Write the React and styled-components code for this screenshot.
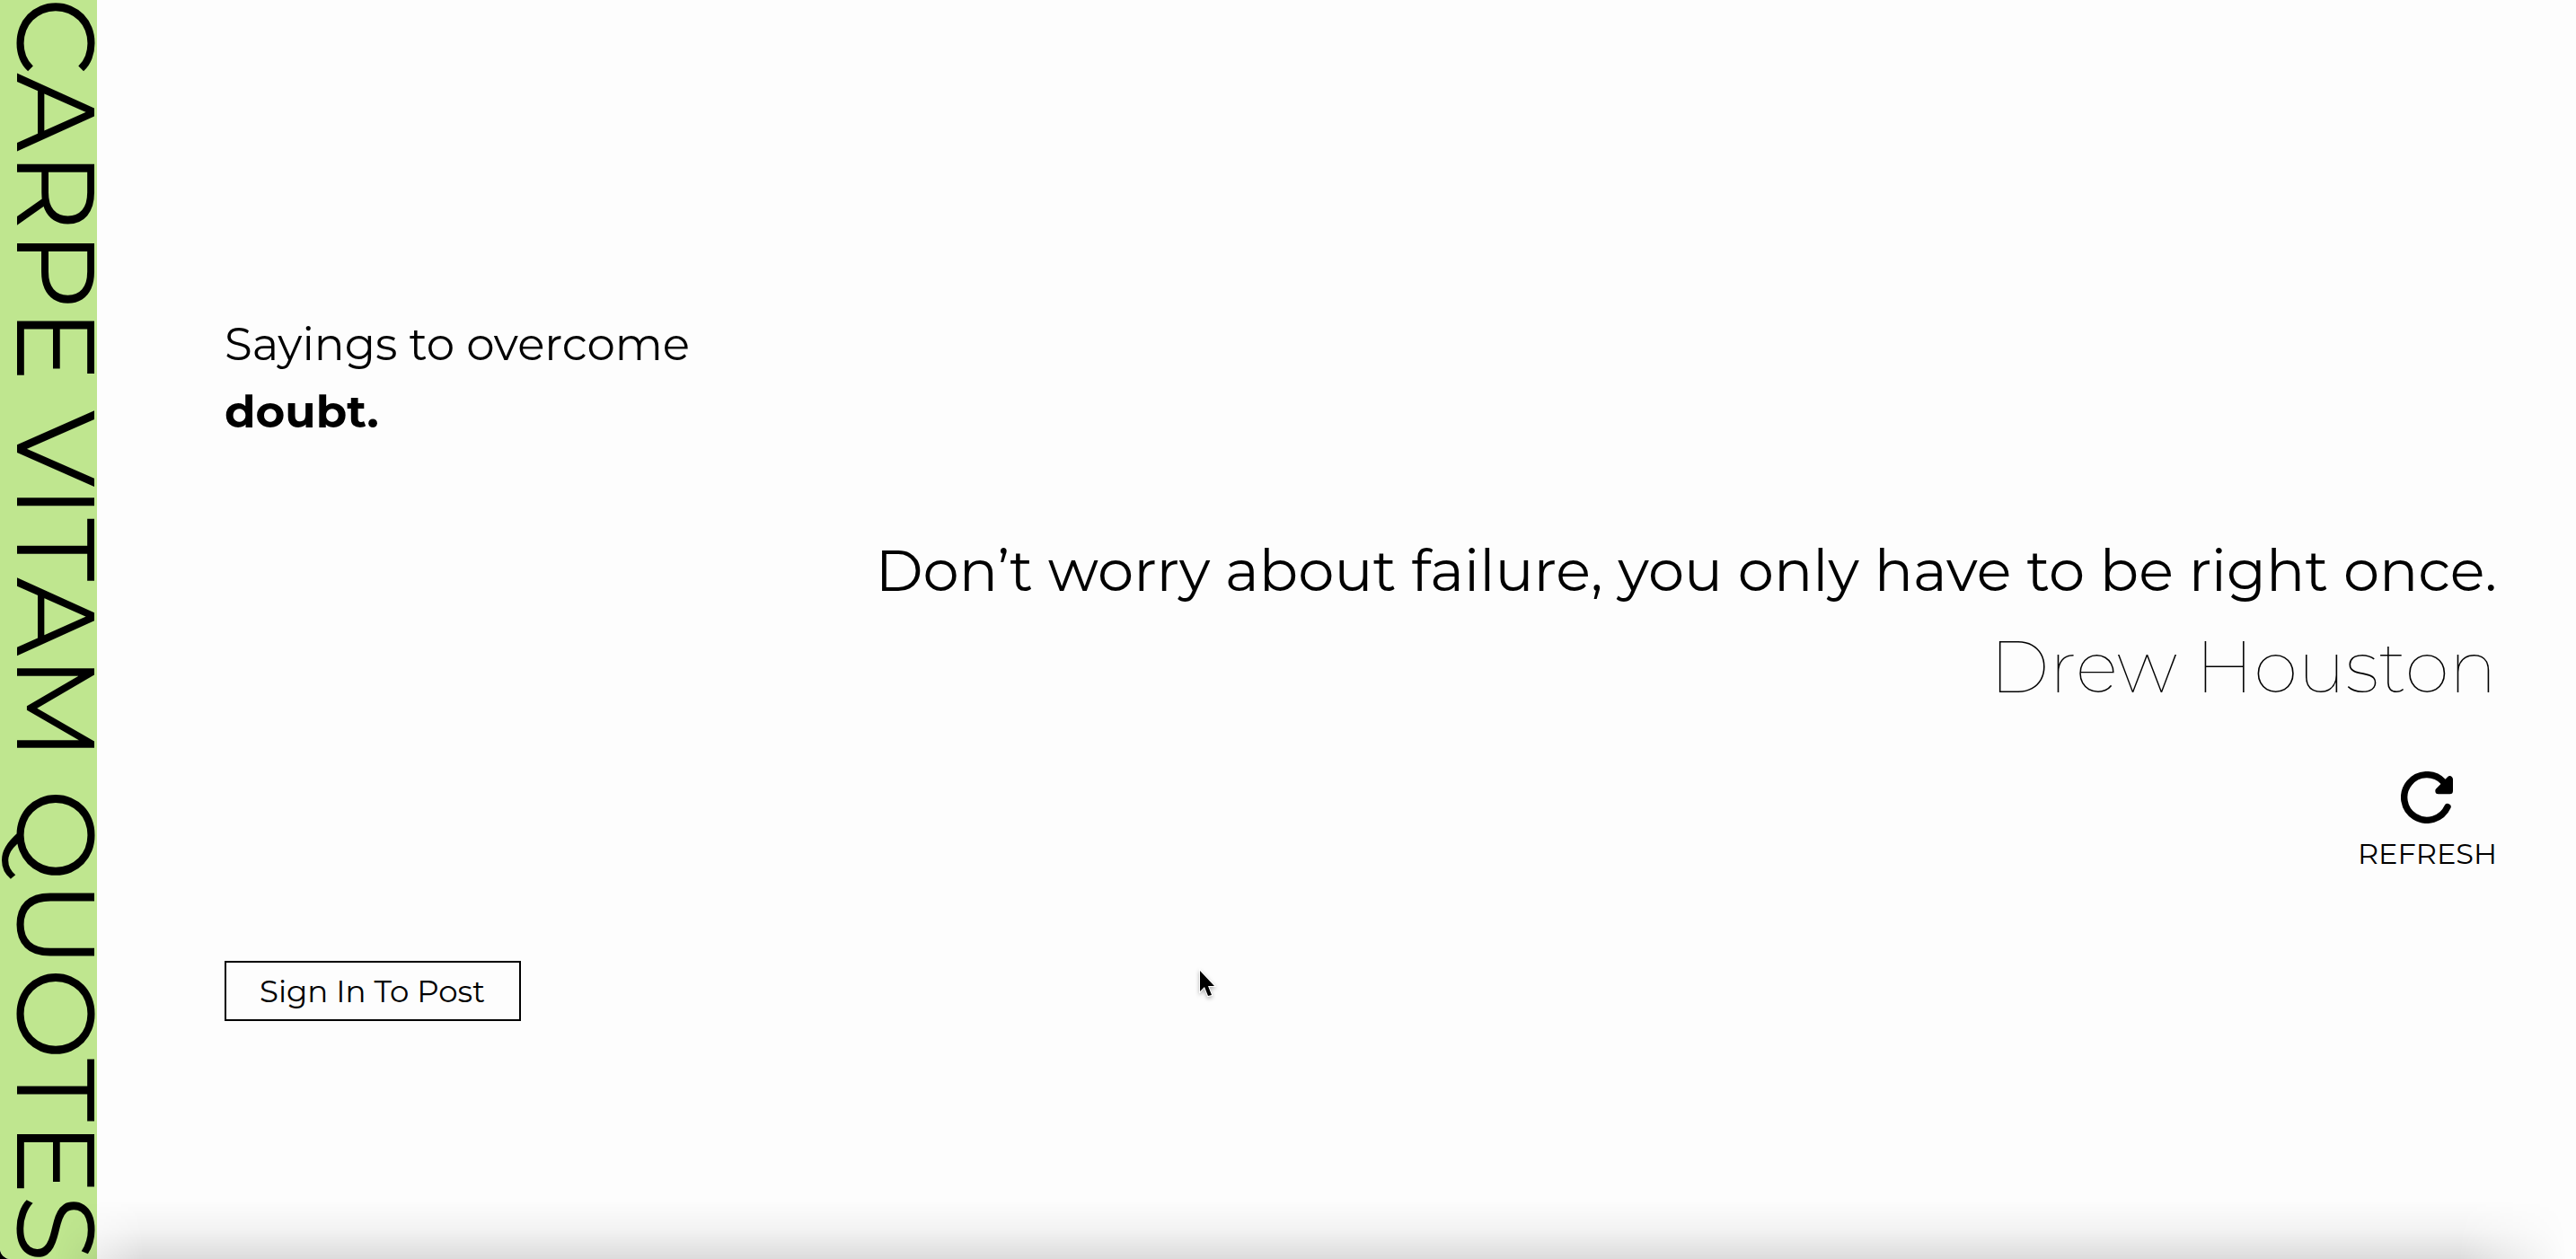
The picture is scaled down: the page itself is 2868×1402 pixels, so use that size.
import React from "react";
import styled, { createGlobalStyle } from "styled-components";

const GlobalStyle = createGlobalStyle`
  *, *::before, *::after { box-sizing: border-box; }
  html { background: #000; }
  body {
    margin: 0;
    color: #000;
    font-family: Montserrat, Inter, "Open Sans", sans-serif;
  }
  h1, h2, p, blockquote, figure { margin: 0; }
`;

const Page = styled.div`
  position: relative;
  display: flex;
  height: 100vh;
  overflow: hidden;
  background: #fdfdfd;
  border-bottom-left-radius: 12px;
`;

const Sidebar = styled.aside`
  flex: none;
  display: flex;
  align-items: center;
  justify-content: flex-end;
  width: 108px;
  background: #bfe68f;
`;

const Brand = styled.h1`
  writing-mode: vertical-rl;
  font-size: 122px;
  font-weight: 400;
  line-height: 92px;
  white-space: nowrap;
`;

const Main = styled.main`
  flex: 1;
  min-width: 0;
  display: flex;
  flex-direction: column;
  align-items: flex-start;
  padding: 346px 88px 0 142px;
`;

const Topic = styled.h2`
  font-size: 50px;
  font-weight: 400;
  line-height: 75px;

  strong { display: block; font-weight: 700; }
`;

const Quote = styled.figure`
  align-self: flex-end;
  margin-top: 87px;
  text-align: right;
`;

const Saying = styled.blockquote`
  font-size: 64px;
  font-weight: 400;
  line-height: 104px;
`;

const Author = styled.figcaption`
  font-size: 80px;
  font-weight: 100;
  line-height: 112px;
`;

const Refresh = styled.button`
  align-self: flex-end;
  display: flex;
  flex-direction: column;
  align-items: center;
  gap: 12px;
  margin-top: 60px;
  padding: 0;
  border: 0;
  background: none;
  color: inherit;
  font: 400 32px/44px Montserrat, Inter, "Open Sans", sans-serif;
  cursor: pointer;
`;

const SignIn = styled.button`
  width: 330px;
  height: 67px;
  margin-top: 97px;
  padding: 0 37px;
  border: 2px solid #000;
  background: none;
  color: inherit;
  text-align: left;
  white-space: nowrap;
  font: 400 34px/44px Montserrat, Inter, "Open Sans", sans-serif;
  cursor: pointer;
`;

const BottomShade = styled.div`
  position: absolute;
  left: 0;
  right: 0;
  bottom: 0;
  height: 66px;
  background: linear-gradient(to bottom, transparent, rgba(0, 0, 0, 0.04) 50%, rgba(0, 0, 0, 0.13));
  mask-image: linear-gradient(to right, transparent 60px, #000 160px, #000 calc(100% - 130px), transparent calc(100% - 10px));
  pointer-events: none;
`;

const Pointer = styled.svg`
  position: absolute;
  left: 1330px;
  top: 1076px;
  filter: drop-shadow(0 2px 2px rgba(0, 0, 0, 0.3));
  pointer-events: none;
`;

function RefreshIcon() {
  return (
    <svg width="58" height="58" viewBox="-29 -29 58 58" aria-hidden="true">
      <path
        d="M23 10.500A25.300 25.300 0 1 1 18.500 -17.300"
        fill="none"
        stroke="currentColor"
        strokeWidth="7.400"
        strokeLinecap="round"
      />
      <path
        d="M25.500 -20.200V-7.200H12.800Z"
        fill="currentColor"
        stroke="currentColor"
        strokeWidth="7"
        strokeLinejoin="round"
      />
    </svg>
  );
}

export default function App() {
  return (
    <>
      <GlobalStyle />
      <Page>
        <Sidebar>
          <Brand>CARPE VITAM QUOTES</Brand>
        </Sidebar>
        <Main>
          <Topic>
            Sayings to overcome <strong>doubt.</strong>
          </Topic>
          <Quote>
            <Saying>Don’t worry about failure, you only have to be right once.</Saying>
            <Author>Drew Houston</Author>
          </Quote>
          <Refresh type="button">
            <RefreshIcon />
            REFRESH
          </Refresh>
          <SignIn type="button">Sign In To Post</SignIn>
        </Main>
        <BottomShade />
        <Pointer width="28" height="40" viewBox="-6 -5 28 40" aria-hidden="true">
          <path
            d="M0 0V23L5 18L9 28L13 27L9 17H16Z"
            fill="#000"
            stroke="#fff"
            strokeWidth="2"
            paintOrder="stroke"
          />
        </Pointer>
      </Page>
    </>
  );
}
